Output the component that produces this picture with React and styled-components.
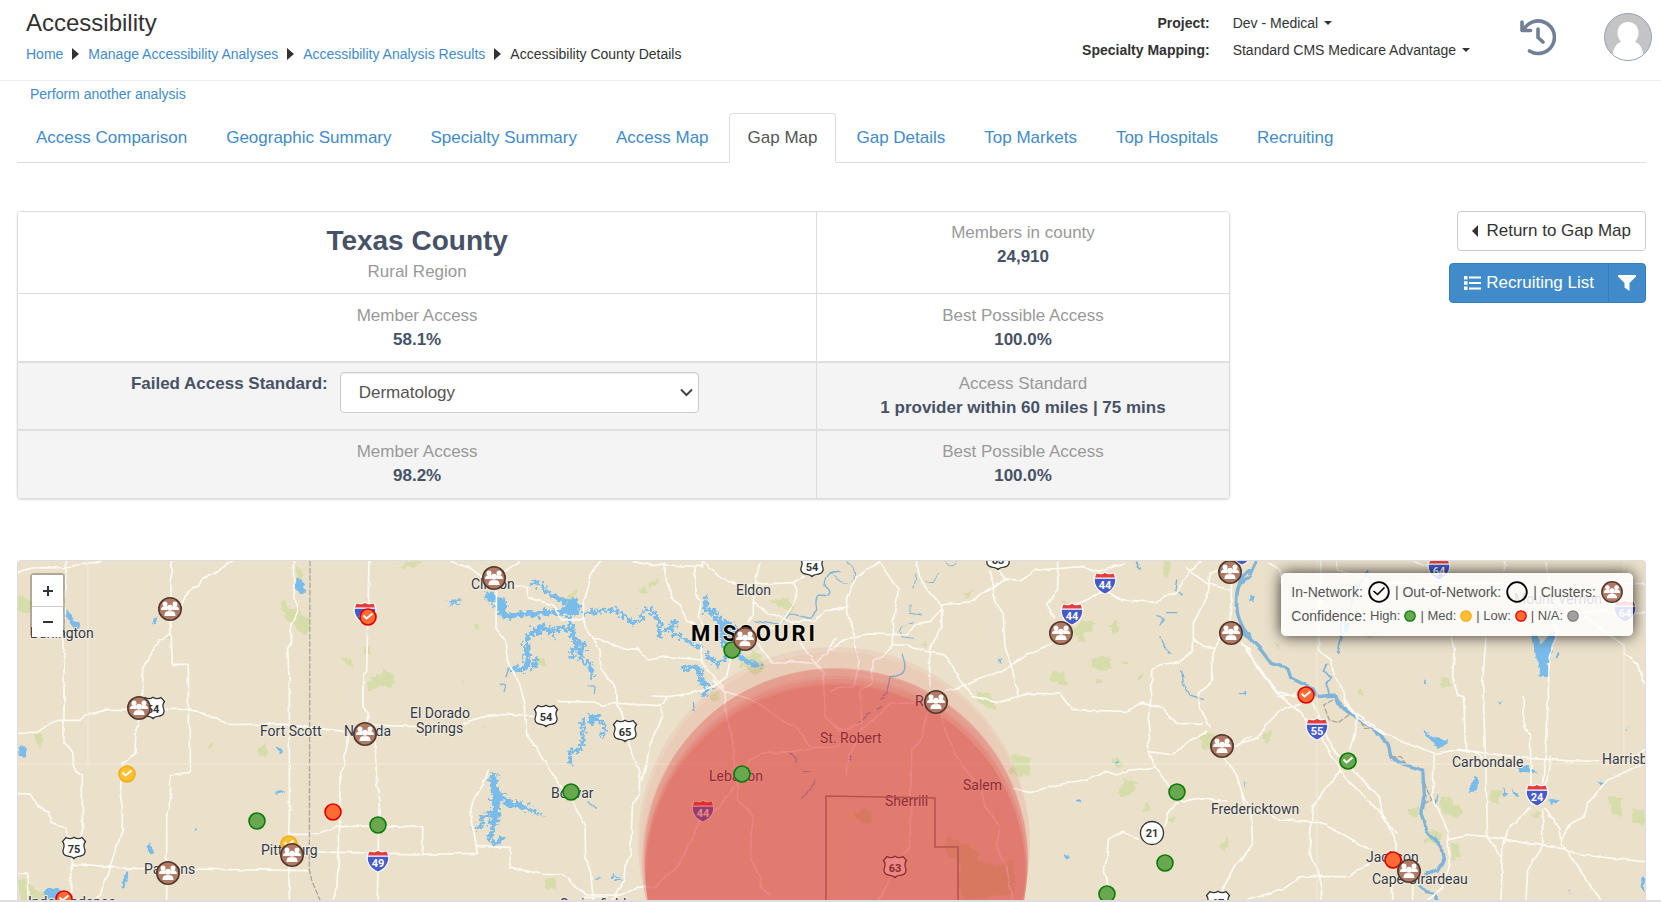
import React from "react";
import styled, { createGlobalStyle, css } from "styled-components";

const GlobalStyle = createGlobalStyle`
  *, *::before, *::after { box-sizing: border-box; }
  body {
    margin: 0;
    background: #fff;
    color: #333;
    font-family: "Liberation Sans", Arial, sans-serif;
    font-size: 14px;
    line-height: 20px;
  }
  button, select { font-family: inherit; }
`;

const Page = styled.div`
  display: flex;
  flex-direction: column;
  min-height: 100vh;
  border-bottom: 2px solid #dcdee2;
`;

const Header = styled.header`
  display: flex;
  align-items: flex-start;
  height: 81px;
  padding: 0 9px 0 26px;
  border-bottom: 1px solid #e8eef4;
`;

const Heading = styled.div`
  flex: 1;
  padding-top: 8px;
`;

const Title = styled.h1`
  margin: 0;
  font-size: 24px;
  font-weight: 400;
  line-height: 30px;
`;

const Breadcrumb = styled.nav`
  display: flex;
  align-items: center;
  gap: 9px;
  margin-top: 6px;
`;

const Link = styled.a`
  color: #428bca;
  text-decoration: none;
`;

const Triangle = styled.span`
  border: 6px solid transparent;
  ${({ $point }) =>
    $point === "right"
      ? css`border-left: 7px solid #333; border-right: 0;`
      : css`border-right: 6px solid #333; border-left: 0;`}
`;

const ProjectInfo = styled.dl`
  display: grid;
  grid-template-columns: auto auto;
  column-gap: 23px;
  row-gap: 7px;
  margin: 13px 50px 0 0;

  dt { font-weight: 700; text-align: right; }
  dd { margin: 0; }
`;

const PickerButton = styled.button`
  display: flex;
  align-items: center;
  gap: 6px;
  padding: 0;
  border: 0;
  background: none;
  color: #333;
  font-size: 14px;
  line-height: 20px;

  &::after {
    content: "";
    border: 4px solid transparent;
    border-top-color: #333;
    border-bottom: 0;
  }
`;

const IconButton = styled.button`
  display: flex;
  padding: 0;
  border: 0;
  border-radius: 50%;
  background: none;
  margin-top: ${({ $top }) => $top}px;
  margin-right: ${({ $right }) => $right}px;
`;

const Content = styled.main`
  flex: 1;
  display: flex;
  flex-direction: column;
  padding: 3px 15px 0 17px;
`;

const AnalysisLink = styled(Link)`
  align-self: flex-start;
  margin-left: 13px;
`;

const Tabs = styled.nav`
  display: flex;
  gap: 1px;
  margin-top: 9px;
  border-bottom: 1px solid #ddd;
`;

const Tab = styled.a`
  margin-bottom: -1px;
  padding: 12px 18px;
  border: 1px solid transparent;
  border-radius: 4px 4px 0 0;
  color: #428bca;
  font-size: 17px;
  line-height: 24px;
  text-decoration: none;
  ${({ $active }) =>
    $active &&
    css`
      border-color: #ddd #ddd #fff;
      background: #fff;
      color: #555;
    `}
`;

const Summary = styled.section`
  display: grid;
  grid-template-columns: minmax(0, 3fr) minmax(0, 1fr);
  gap: 12px;
  align-items: start;
  margin-top: 48px;
`;

const Panel = styled.div`
  border: 1px solid #ddd;
  border-radius: 4px;
  box-shadow: 0 1px 2px rgba(0, 0, 0, 0.15);
  overflow: hidden;
`;

const Cell = styled.div`
  padding-top: 10px;
  text-align: center;
  font-size: 17px;
  line-height: 24px;

  & + & { border-left: 1px solid #ddd; }
`;

const PanelRow = styled.div`
  display: grid;
  grid-template-columns: 60fr 31fr;
  min-height: ${({ $tall }) => ($tall ? 81 : 68)}px;
  background: ${({ $shaded }) => ($shaded ? "#f4f4f4" : "#fff")};
  box-shadow: ${({ $shaded }) => ($shaded ? "inset 0 1px 1px rgba(0, 0, 0, 0.08)" : "none")};

  & + & { border-top: 1px solid #ddd; }
  &:last-child { min-height: 69px; }
  &:first-child > ${Cell} { padding-top: 9px; }
`;

const CountyName = styled.h2`
  margin: 0;
  color: #475266;
  font-size: 28px;
  line-height: 39px;
`;

const Caption = styled.div`
  color: #999;
`;

const Value = styled.div`
  color: #475266;
  font-weight: 700;
`;

const StandardField = styled(Cell)`
  display: grid;
  grid-template-columns: 62fr 72fr 21fr;
  gap: 12px;
  align-items: start;
`;

const FieldLabel = styled.label`
  color: #475266;
  font-weight: 700;
  text-align: right;
`;

const SelectBox = styled.div`
  display: grid;
  align-items: center;

  > * { grid-area: 1 / 1; }
  svg { justify-self: end; margin-right: 6px; pointer-events: none; }
`;

const Select = styled.select`
  width: 100%;
  height: 41px;
  padding: 0 18px;
  appearance: none;
  border: 1px solid #ccc;
  border-radius: 4px;
  background: #fff;
  box-shadow: inset 0 1px 1px rgba(0, 0, 0, 0.08);
  color: #555;
  font-size: 17px;
`;

const Actions = styled.div`
  display: flex;
  flex-direction: column;
  align-items: flex-end;
  gap: 12px;
`;

const Button = styled.button`
  display: flex;
  align-items: center;
  gap: ${({ $primary }) => ($primary ? 5 : 8)}px;
  height: 40px;
  padding: 0 14px;
  border: 1px solid ${({ $primary }) => ($primary ? "#357ebd" : "#ccc")};
  border-radius: 4px;
  background: ${({ $primary }) => ($primary ? "#428bca" : "#fff")};
  color: ${({ $primary }) => ($primary ? "#fff" : "#333")};
  font-size: 17px;
  line-height: 24px;
`;

const ButtonGroup = styled.div`
  display: flex;

  ${Button}:first-child { border-radius: 4px 0 0 4px; }
  ${Button}:last-child {
    margin-left: -1px;
    padding: 0 9px;
    border-radius: 0 4px 4px 0;
  }
`;

const MapFrame = styled.section`
  position: relative;
  flex: 1;
  min-height: 340px;
  margin-top: 61px;
  border: 1px solid #ddd;
  border-bottom: 0;
  border-radius: 4px 4px 0 0;
  background: #ebe1cb;
  overflow: hidden;
`;

const MapDrawing = styled.svg`
  position: absolute;
  inset: 0;
  width: 100%;
  height: 100%;
`;

const ZoomControl = styled.div`
  position: absolute;
  top: 12px;
  left: 12px;
  border: 2px solid rgba(0, 0, 0, 0.25);
  border-bottom: 0;
  border-radius: 4px;
  background-clip: padding-box;
`;

const ZoomButton = styled.button`
  display: flex;
  align-items: center;
  justify-content: center;
  width: 31px;
  height: 31px;
  padding: 0;
  border: 0;
  background: #fff;

  & + & { border-top: 1px solid #ccc; }
`;

const Legend = styled.div`
  position: absolute;
  top: 12px;
  right: 12px;
  padding: 7px 10px 9px;
  border-radius: 5px;
  background: rgba(255, 255, 255, 0.84);
  box-shadow: 0 0 15px rgba(0, 0, 0, 0.8);
  color: #555;
`;

const LegendRow = styled.div`
  display: flex;
  align-items: center;
  gap: ${({ $small }) => ($small ? 4 : 5)}px;
  height: ${({ $small }) => ($small ? 23 : 24)}px;
  font-size: ${({ $small }) => ($small ? 13 : 14)}px;

  svg { flex: none; }
`;

const LegendTitle = styled.span`
  font-size: 14px;
`;

/* ---- icons ---- */

const HistoryIcon = () => (
  <svg width="36" height="38" viewBox="0 0 36 38" fill="none" stroke="#718096" strokeWidth="3.6" strokeLinecap="round" strokeLinejoin="round">
    <path d="M3.5 12A16.3 16.3 0 1 1 9.5 33" />
    <path d="M2 4v8.5h8.5M18 11v8.500l5 4.500" />
  </svg>
);

const Avatar = () => (
  <svg width="48" height="48" viewBox="0 0 48 48">
    <clipPath id="avatar"><circle cx="24" cy="24" r="23.500" /></clipPath>
    <g clipPath="url(#avatar)">
      <path d="M0 0h48v48H0z" fill="#c4c4c4" />
      <path d="M24 9c7 0 10.500 5 10.500 11 0 4-1.500 6.500-3.500 9 6 1.500 8.500 9 10 21H7c1.500-12 4-19.500 10-21-2-2.500-3.500-5-3.500-9 0-6 3.500-11 10.500-11z" fill="#fff" />
    </g>
    <circle cx="24" cy="24" r="23.500" fill="none" stroke="#93a3bd" />
  </svg>
);

const ListIcon = () => (
  <svg width="17" height="16" viewBox="0 0 17 16" fill="#fff">
    <path d="M0 1h3.500v3.500H0zM0 6.200h3.500v3.500H0zM0 11.500h3.500V15H0zM5 1.500h12v2H5zM5 7h12v2H5zM5 12.500h12v2H5z" />
  </svg>
);

const FilterIcon = () => (
  <svg width="18" height="16" viewBox="0 0 18 16" fill="#fff">
    <path d="M0 0h18v1.500L11.500 8v8L6.500 12.500V8L0 1.500z" />
  </svg>
);

const Chevron = () => (
  <svg width="13" height="9" viewBox="0 0 13 9" fill="none" stroke="#444" strokeWidth="2">
    <path d="M1 1.500l5.500 5.500L12 1.500" />
  </svg>
);

/* ---- map symbols ---- */

const CONFIDENCE = {
  high: ["#6aa84f", "#0b7a0b"],
  med: ["#fdc02f", "#f0ad1e"],
  low: ["#ff6b33", "#dd0000"],
  na: ["#a0a0a0", "#808080"],
};

const Cluster = ({ x, y, r = 11 }) => (
  <g transform={`translate(${x} ${y}) scale(${r / 11})`}>
    <circle r="11.200" fill="#b07b65" stroke="#54392f" strokeWidth="1.600" />
    <g fill="#fff">
      <circle cx="-5" cy="-5" r="2.500" />
      <circle cx="5" cy="-5" r="2.500" />
      <path d="M-9 1c0-3 2-4 4.500-4 1 0 1.700.2 2 .7C-3.500-1-3 .3-2 1zM9 1c0-3-2-4-4.500-4-1 0-1.700.2-2 .7C3.500-1 3 .3 2 1z" />
      <circle cy="-1.200" r="3" />
      <path d="M-5.500 7c0-3.500 1.500-4.700 3.500-4.700h4C4 2.300 5.500 3.500 5.500 7z" />
    </g>
  </g>
);

const Pin = ({ x, y, level, check, r = 8 }) => (
  <g transform={`translate(${x} ${y})`}>
    <circle r={r} fill={CONFIDENCE[level][0]} stroke={CONFIDENCE[level][1]} strokeWidth="1.600" />
    {check && <path d="M-4.500-1.500l3 3L4.500-3.500" fill="none" stroke="#fff" strokeWidth="2" />}
  </g>
);

const shieldText = { textAnchor: "middle", fontFamily: "Roboto, sans-serif", fontSize: 11, fontWeight: 700 };

const Interstate = ({ x, y, n }) => (
  <g transform={`translate(${x} ${y})`}>
    <path d="M-9-10.500c3 1.500 6 1 9-1 3 2 6 2.500 9 1 3 3 3 8 1.500 12C8.500 7 4 10 0 11.500-4 10-8.500 7-10.500 1.500-12-2.500-12-7.500-9-10.500z" fill="#fff" />
    <path d="M-8.500-9.500c3 1.300 6 1 8.500-.8 2.500 1.800 5.500 2.100 8.500.8L10-5.500h-20z" fill="#e43d3d" />
    <path d="M-10.200-4.300h20.400c.5 6-3.200 11.800-10.200 14.800-7-3-10.700-8.800-10.200-14.800z" fill="#465bc9" />
    <text y="5.500" fill="#fff" {...shieldText}>{n}</text>
  </g>
);

const UsRoute = ({ x, y, n }) => (
  <g transform={`translate(${x} ${y})`}>
    <path
      d="M-8-10.500c2.500 1.500 5.500 1.500 8-.3 2.500 1.800 5.500 1.800 8 .3l3.500 4C9.500-4 9.500-2 10.500.5c1.800 4-.5 7-4 7.500C4 8.300 1.500 8.500 0 10.500-1.500 8.500-4 8.300-6.500 8-10 7.500-12.300 4.500-10.500.5c1-2.500 1-4.500-1-7z"
      fill="#fff" stroke="#333" strokeWidth="1.300"
    />
    <text y="4.500" fill="#333" {...shieldText}>{n}</text>
  </g>
);

const Place = ({ x, y, children }) => (
  <text x={x} y={y} fontFamily="Roboto, sans-serif" fontSize="14" fill="#333a4a" stroke="#f3ecdd" strokeWidth="2" strokeLinejoin="round" paintOrder="stroke">
    {children}
  </text>
);

/* ---- map data ---- */

const places = [
  [30, 638, "Burlington"], [260, 736, "Fort Scott"], [344, 736, "Nevada"], [261, 855, "Pittsburg"],
  [144, 874, "Parsons"], [28, 907, "Independence"], [410, 718, "El Dorado"], [416, 733, "Springs"],
  [471, 589, "Clinton"], [736, 595, "Eldon"], [551, 798, "Bolivar"], [709, 781, "Lebanon"],
  [820, 743, "St. Robert"], [915, 706, "Rolla"], [963, 790, "Salem"], [885, 806, "Sherrill"],
  [1211, 814, "Fredericktown"], [1366, 862, "Jackson"], [1372, 884, "Cape Girardeau"],
  [1452, 767, "Carbondale"], [1602, 764, "Harrisburg"], [1514, 604, "Mount Vernon"], [560, 909, "Springfield"],
];

const interstates = [
  [365, 613, "49"], [378, 861, "49"], [703, 811, "44"], [1105, 583, "44"], [1072, 614, "44"],
  [1439, 569, "64"], [1317, 729, "55"], [1537, 795, "24"], [1625, 611, "64"], [1242, 554, "55"],
];

const usRoutes = [
  [74, 848, "75"], [153, 708, "54"], [546, 716, "54"], [625, 731, "65"],
  [812, 566, "54"], [895, 867, "63"], [998, 559, "63"], [1218, 902, "67"],
];

const clusters = [
  [170, 609], [139, 708], [365, 734], [292, 855], [168, 873], [494, 578], [745, 639],
  [936, 702], [1061, 633], [1230, 572], [1231, 633], [1222, 746], [1409, 871],
];

const pins = [
  [368, 617, "low", true], [64, 899, "low", true], [1306, 695, "low", true], [333, 812, "low"],
  [1393, 860, "low"], [127, 774, "med", true], [289, 844, "med", true], [257, 821, "high"],
  [378, 825, "high"], [732, 650, "high"], [571, 792, "high"], [742, 774, "high"],
  [1177, 792, "high"], [1165, 863, "high"], [1107, 894, "high"], [1348, 761, "high", true],
];

const coverage = [
  [834, 843, 196, 0.07], [835, 847, 195, 0.04], [836, 860, 192, 0.18], [835, 862, 193, 0.11],
  [836, 867, 191, 0.07], [836, 870, 191, 0.08], [835, 873, 190, 0.09], [836, 875, 190, 0.1],
];

/* Each tile is drawn on a grid of thirds of a pixel. */
const tiles = [
  {
    x: 0,
    parks: [
      "M50 135l25 5 15 15-5 35-30-5z", "M838 155l22 0 5 20 30-2 10 25 22 5 5 30-10 20-25-5-8-20-25-15-12-20z",
      "M1100 405l15-25 30-5 10-25 15 20 20 20-15 20-40-5-25 20z", "M1085 288l25 10 5 20-20-10zM1028 325l25 5 8 25-20-10z",
      "M102 545l20 5 8 20-10 25-15-20zM620 590l18-12-8 16z", "M775 595l20-12 10 20-10 18-20-5z",
      "M55 985l30 10 25 25 80 20-40 12-90 0zM890 55l15 5 3 25-12 15zM1195 58l20-20 45-8v15zM495 255l20 5-5 15z",
    ],
    lakes: [
      "M200 178l8 5 12 25 15 8 5 20-15 5-18-28-10-10zM888 80l8 5 15 10-2 12 10 20-15 3-18-8 5-15zM455 228l6-20 12-10-5 20z",
      "M55 590l12-5 14 20-4 22-22-10zM830 585l15 12-3 15-10-12zM826 730l15-14 12 8-20 10zM585 830l9 4-4 12z",
      "M443 885l8-5 8 20-3 14-12-12zM375 968l12-5-5 30-10 25-8-5zM130 1030l20-20 20 5 35 25-10 15-50-8z",
    ],
    roads: [
      "M52 67L92 54 192 53 305 33", "M200 33L192 165 192 578 214 600 218 640 228 665 247 675 247 850 222 900 218 940 212 960 212 1050",
      "M513 33L513 246 517 343 565 343 565 520 571 540 571 667 512 675 511 770 500 795 500 1050",
      "M697 33L640 72 607 87 597 107 580 112 555 140 545 170", "M513 250L475 275 428 352 428 440 415 515 408 540 405 612 365 640 361 740 367 770 367 840 330 950 310 1000 302 1035 280 1050",
      "M52 547L118 547 140 525 175 511 240 511 255 495 330 478 560 478 610 488 640 505 660 508 690 523 860 523 1035 545",
      "M52 731L90 732 115 770 150 790 153 815 200 838 205 860", "M52 972L80 973 85 1050M215 942L290 950 410 955 925 962",
      "M880 33L882 120 892 185 870 240 875 275 863 295 868 400 868 800 866 850 868 1050", "M1107 33L1100 365 1089 375 1089 470 1105 490 1100 520",
      "M1107 525L1260 530M866 850L955 850 1015 830 1110 828 1200 832 1215 826 1260 830M905 905L1260 912",
      "M1042 560L1040 590 1030 655 1020 670 1018 890 1010 1020 998 1050M1125 560L1130 705 1138 725 1132 1050",
    ],
    borders: ["M930 33L928 960 935 990 960 1050"],
  },
  {
    x: 420,
    jagged: true,
    parks: [
      "M655 120l20-12 8 18-25 10zM685 100l25-12 5 15-25 12zM1048 150l50-5 30 25-10 20-30-15zM342 320l30 5 8 25-35-5z",
      "M955 350l40-50 30 15 10 35-30 30-25-25zM120 393h10v8h-10zM375 985l35 0-5 30-25 5zM430 160l30-45 10 10-20 60z",
      "M163 225h10v8h-10zM193 525l8 3-3 10zM868 430l30-8 0 28-20 5z",
    ],
    lakes: [
      "M82 150l42 5-5 10-35-5zM195 125l25 5 20 15 10-10 12 30-5 25-25 0-15-40-15 5zM430 175l15-25 20-5 18 20-10 30-30 5z",
      "M210 670l22 0 0 40 15 20 20 15-25 10-5 60-15 25-15-5 5-50 5-20z", "M240 735l30 15 50 15 25 15 35 20-25-5-45-15-30-10-20 0z",
      "M340 330l15-5-5 30-15-10zM500 495l30 0 10 20-30 10zM880 200l50 15 30 30-5 50-35 10-20-40z", "M575 978l30 5-5 8-25-5z",
    ],
    rivers: [
      ["M335 95L360 100 375 120 400 140 430 150 445 180 455 230 460 265 475 300 485 330 510 345 515 380", 12],
      ["M240 185L265 200 300 195 320 190 345 195 375 185 410 188 440 185", 16],
      ["M490 190L540 182 580 180 600 190 640 220 665 205 668 180 700 185 720 215 715 260 745 235 765 210 755 250 790 265 830 290 850 285", 11],
      ["M460 240L420 235 390 245 370 230 345 240 320 265 320 330 325 355 280 358", 15],
      ["M460 300L455 320M465 270L495 290 475 310M350 240L360 255M395 235L400 255", 14],
      ["M855 145L860 180 890 190 900 225 930 240", 15], ["M1020 350L985 335 955 315 930 310 890 345 860 310M850 435L870 410 840 390 835 350 790 358", 12],
      ["M485 515L490 560 480 600 450 605M530 500L555 530 550 560M450 615L452 640", 10],
      ["M215 790L185 800 185 830 160 835M215 800L220 850 205 860 225 885 248 865", 12],
      ["M268 350L258 380M240 405Q265 395 252 425M505 410Q535 400 520 430M525 985L540 980M505 755L530 775", 4],
      ["M1000 212Q1040 220 1080 225L1110 190 1170 205 1190 180Q1180 120 1215 140 1245 130 1212 105 1215 60 1260 65", 4],
      ["M1108 608L1130 625 1125 648M1150 665L1170 665M1185 690L1160 730 1145 748M820 460L823 482", 4],
    ],
    roads: [
      "M95 35L150 55 200 90M297 35L245 70M230 100L228 235 255 270 262 330 300 405 316 470 320 555 350 595 415 700 460 760 495 830 497 920 512 970 520 1050",
      "M275 108L322 110 322 143 400 165 430 212 490 205", "M542 33L510 70 508 95 487 180 495 230 520 265 540 300 542 355 590 420 592 465 610 500 628 585 660 665 658 730 637 770 632 910 615 950 612 990 580 1050",
      "M520 265L550 268 590 292 655 298 685 330 740 320 845 330 855 350 900 400 915 430",
      "M130 520L190 500 275 492 340 500M413 455L520 456 545 465 590 460 720 467 745 440 697 438M720 467L728 500 715 530 690 580 680 640 665 690",
      "M745 440L800 432 880 410 920 380 930 330 935 300", "M640 35L700 47 735 40 735 90 750 110 755 140 780 170 800 210 820 220 845 300 845 340",
      "M735 45L850 50 850 35 880 60 900 85 955 105 1120 98 1150 80M825 50L825 130 845 150 835 200 850 230",
      "M1020 35L1010 80 1000 150 1000 195 985 215M1005 155L1045 190 1065 195 1120 220 1150 210 1185 212 1215 185 1260 172M1120 98L1130 135 1110 180 1080 225 1040 240M1000 270L1060 340 1120 335 1185 340 1220 310 1245 265M1140 280L1185 335 1210 370 1215 500 1260 545",
      "M205 660L195 690 160 750 152 780 172 910 0 913M172 890L270 892 270 955 330 965 365 972 430 975 460 1005 500 1035 600 1035 650 1015 700 1010 780 945 840 810 900 770 950 700 990 630 1030 610 1110 605 1260 585",
      "M880 390L915 430 920 500 940 580 945 680 955 690 955 750 1000 800 990 880 995 940 1025 985 1020 1010 1048 1035M915 425L1000 450 1100 520 1130 530 1170 590M0 830L8 830 8 910M495 1042L560 1042M600 1035L575 1050",
    ],
    borders: [],
  },
  {
    x: 830,
    parks: [
      "M400 130l30-8-10 20-15 5zM725 240l35-30 30 5 0 25-25 10 0 25-20-10zM832 225l30-15 8 30-20 15zM785 325l50-5 10 35-25 10-35-15z",
      "M655 370l45-8 5 25 8 25-20-10-28-10zM870 340l20-10 5 15zM920 380l20-12-10 28zM438 420l40 10 20 50-30-10-30-20z",
      "M545 615l55 5 0 55-40 5-30-20 20-10zM840 630l25-8 15 20-20 15zM865 730l20-45 40 10-15 35-30 10zM940 775l15-18 5 20-20 12z",
      "M1110 560l20-15 20 10 0 40-30 5zM1165 895l30-38 5 15-15 30zM70 795l35-25 18 20 0 28-30-3zM350 860l50 20 50 30-10 20 60 20 50-20 5 100-150 20-20-50 10-60-50-30z",
      "M270 290l20-20 5 20zM798 390h18v12h-18zM1000 30l25 5-10 50-15-10zM690 155l15-5 5 15zM1010 800l25 0-10 25z",
    ],
    lakes: ["M735 752l15-4 0 12-12 2zM700 912l15 2 3 15-10-5zM505 322l8 0-2 22-6-10zM855 632l12 0-3 20-8-10zM1230 425l18 0-2 8-16 0zM910 810l12 15M1240 690l8 15-3 10z"],
    rivers: [
      ["M0 70Q50 120 72 85 80 50 50 35M345 35Q360 60 382 38M325 70L310 98 285 95M258 75L252 115M240 165L240 190 275 195M250 215Q200 225 215 260L250 265", 3],
      ["M215 310Q240 370 200 378L180 380 170 430 150 445M155 470L140 480M120 490L85 520", 4],
      ["M980 200L1000 205 990 225M1040 185L1010 185M990 260L1000 290 1020 310M1055 360L1060 400 1080 435 1120 448M1040 90L1035 120 1060 135", 4],
      ["M1260 60Q1220 90 1220 150 1215 210 1260 262", 11], ["M920 35L930 55M60 630L65 620", 6],
    ],
    roads: [
      "M148 37L205 120 190 210 190 285M148 37L80 80 50 140 50 190 75 250 75 290 88 330 72 410 25 415 0 425",
      "M0 180L45 172M0 300L40 270 110 252 230 255 260 220 300 215 332 180M260 35L270 90 300 130 335 170 335 230 298 300M332 165L420 155 470 120 530 85M483 60L490 140 520 200 525 290 545 350 565 440",
      "M190 285L230 285 290 305 345 315 400 405 430 440 500 458 600 430 690 432 725 478 810 482 890 484 935 460",
      "M298 305L300 410M345 425L405 405 520 360 600 310 690 270M530 88L570 90 620 60 760 50 810 65 880 40M500 60L530 90M683 35L683 120 653 165 670 200",
      "M720 170L760 155 825 120 870 148 980 158 1000 140 1040 130 1060 90 1110 35M1070 55L1130 100 1200 120M1200 40L1140 70 1130 140 1090 220 1090 300M1090 265L1120 292 1155 295M1170 260L1145 320 1145 395 1105 430 1108 470 1140 530",
      "M1090 300L1050 335 985 345 965 360 965 430 955 500 960 540 955 600 975 650 1020 710M935 460L1000 475 1040 520 1120 523M955 605L1030 615 1070 580 1130 545M1205 100L1200 220M1235 280L1260 300",
      "M550 715L600 728 680 705 760 690 830 665 860 675 900 660 970 652M1055 755L1100 745 1185 755M1045 760L1020 775 1005 830M925 865L880 843 835 868 830 930 820 965 835 1010",
      "M1210 590L1260 560M1180 625L1220 675 1245 760M1260 900L1215 945 1175 1020M190 285L160 320 130 330 125 400 90 420 95 520 40 540 15 530M255 460L180 460 120 520 90 540 50 640 50 670",
      "M290 490L280 560 245 600 240 890 220 915M335 500L350 560 400 650 455 720 465 770 510 830 500 890 530 950 545 1050M180 990L145 1050",
    ],
    borders: [],
  },
  {
    x: 1241,
    parks: [
      "M60 545l35 0-10 25-15 8zM600 385l25-3 0 25-25 0zM350 420l15 5 3 15-15-5zM595 740l30 0 40 40-15 30-50-30zM748 720l35 5-10 35-25-5z",
      "M1100 740l40 5 0 60-30-20zM1175 775l35 5 0 45-35-5zM500 780l35-12-5 35-20-5zM100 280l18 5-5 15zM370 240l45 5-5 15-35 0zM630 880l25 0 0 40-22 10zM865 790l40-5-15 25z",
      "M550 870l20-30 30 10-5 30-20 0z",
    ],
    lakes: [
      "M875 250l10 5 15 25 30-35 10 10-10 60-10 25 5 40-30 0-5-50-15-40zM545 540l15 10 30 15 30 5 0 10-25 15-15-10zM700 680l10 5 0 40-25 5 5-20z",
      "M785 705l8 20 12 5-18 10zM810 710l28 30-15-5zM815 635l60 20 15 15-50-5zM925 745l40 10-35 10zM1070 695l28 5-20 6zM770 455l12 3-8 8zM308 215h18v30h-18zM25 138h20l-5 15-15-3zM1153 545l10-20-5 15zM980 1018l12 15-8-5zM635 880l5 8-6-3zM545 398l10-10 5 20M1200 990l12-15v50l-8-5z",
    ],
    rivers: [
      ["M0 240L60 300 90 340 140 355 150 385 215 415 230 440 280 435 290 460 330 490 400 540 440 580 450 620 480 640 545 660 550 730 540 790 560 850 600 890 608 935 590 960 555 970M540 1010L555 1025 585 1030 585 1050", 10],
      ["M45 35L25 80 0 100", 8], ["M380 65L340 130 320 200M300 225L300 270 290 310M265 435L255 400 268 385 250 360 260 340", 5],
      ["M590 735L585 760", 4], ["M955 310L950 325", 6],
    ],
    roads: [
      "M0 280L25 300 40 340 100 420 180 490 240 560 310 680 430 800 465 880 465 900", "M10 290L60 360 110 425 215 450 270 590 340 665 415 740 425 800 465 850",
      "M110 440L165 430M205 455L120 480 90 510 65 540 45 565 0 580M85 40L120 60 120 100M240 35L232 300 270 330 280 380 310 425 310 460 350 500 345 540 325 600",
      "M310 450L340 485 430 550 500 580 580 610 650 600 710 610 738 640", "M345 500L430 555M650 598L860 625 1000 633 1060 633 1185 620 1210 600",
      "M285 35L290 60 420 100 780 100M630 260L640 300 635 380 650 435 668 440 674 605M735 260L725 400 735 660 738 800 740 860 780 920M790 35L790 60",
      "M1210 400L1190 340 1150 310 1150 290 1030 200M915 35L945 260 925 320 918 560 905 705M850 440L848 535 868 550 870 705M928 620L915 710M970 180L1210 190M1040 105L1210 100",
      "M580 610L575 740 620 840 625 950 600 1020 560 1050M865 775L800 840 785 900 780 1050M905 775L905 890 860 960 855 1050M915 775L955 840 960 880 1080 1050",
      "M625 868L690 855 740 860 860 880 960 895 1020 915 1210 935M1210 640L1100 690 1040 760 1030 800 990 820 960 870M520 35L560 50",
      "M300 660L245 730 215 770 205 900 220 940 240 980 242 1050M70 790L120 810 230 815 300 850 390 900M0 725L30 790 35 880 0 935M20 1050L130 1015 180 980 320 980 385 940M455 980L455 1050M515 1000L515 1050",
    ],
    borders: ["M275 450L248 465 265 510 292 518 330 490M360 515L370 535 395 535M450 620L480 620 500 650M550 700L572 750 545 762"],
  },
];

/* Roughens the edges of shores and woods so that they read as natural outlines. */
const Rough = ({ id, frequency, scale }) => (
  <filter id={id} filterUnits="userSpaceOnUse" x="0" y="0" width="1270" height="1060" colorInterpolationFilters="sRGB">
    <feTurbulence type="fractalNoise" baseFrequency={frequency} numOctaves="2" seed="4" result="noise" />
    <feDisplacementMap in="SourceGraphic" in2="noise" scale={scale} xChannelSelector="R" yChannelSelector="G" />
  </filter>
);

const MapBase = () => (
  <MapDrawing viewBox="18 561 1627 400" preserveAspectRatio="xMidYMin slice" role="img" aria-label="Gap map of southern Missouri">
    <defs>
      <Rough id="shore" frequency="0.09" scale="36" />
      <Rough id="edge" frequency="0.06" scale="20" />
      <Rough id="lane" frequency="0.03" scale="12" />
    </defs>
    {tiles.map((t) => (
      <g key={t.x} transform={`translate(${t.x} 550) scale(0.33333)`} fill="none" strokeLinejoin="round" strokeLinecap="round">
        <g fill="#d6dcaa" filter="url(#edge)">
          {t.parks.map((d) => <path key={d} d={d} />)}
        </g>
        <g filter={t.jagged ? "url(#shore)" : "url(#edge)"}>
          {t.lakes.map((d) => <path key={d} d={d} fill="#79bcec" />)}
          {(t.rivers || []).filter(([, w]) => t.jagged && w > 5).map(([d, w]) => <path key={d} d={d} stroke="#79bcec" strokeWidth={w} />)}
        </g>
        <g filter="url(#lane)">
          {(t.rivers || []).filter(([, w]) => !t.jagged || w <= 5).map(([d, w]) => <path key={d} d={d} stroke="#7fb4da" strokeWidth={w} />)}
          {t.roads.map((d) => <path key={d} d={d} stroke="#fcfaf3" strokeWidth="5" />)}
        </g>
        {t.borders.map((d) => <path key={d} d={d} stroke="#aaa69c" strokeWidth="4" strokeDasharray="14 8" />)}
      </g>
    ))}
    <path d="M18 764H1645M88 561V764M1317 561V901M1624 561V764" stroke="#f3ebda" fill="none" />
    {interstates.map(([x, y, n]) => <Interstate key={`${x}-${y}`} x={x} y={y} n={n} />)}
    {usRoutes.map(([x, y, n]) => <UsRoute key={`${x}-${y}`} x={x} y={y} n={n} />)}
    <circle cx="1152" cy="833" r="11.500" fill="#fff" stroke="#333" strokeWidth="1.300" />
    <text x="1152" y="837" fill="#333" {...shieldText}>21</text>
    {places.map(([x, y, name]) => <Place key={name} x={x} y={y}>{name}</Place>)}
    <text x="691" y="641" fontFamily="Roboto, sans-serif" fontSize="22" fontWeight="700" letterSpacing="3" fill="#000" stroke="#f3ecdd" strokeWidth="2" paintOrder="stroke">MISSOURI</text>
    {coverage.map(([cx, cy, r, o]) => <circle key={cy} cx={cx} cy={cy} r={r} fill="rgb(220,40,40)" fillOpacity={o} />)}
    <path d="M826 901V796L935 798V847H958V901" fill="none" stroke="#b9534f" strokeWidth="1.600" />
    {pins.map(([x, y, level, check]) => <Pin key={`${x}-${y}`} x={x} y={y} level={level} check={check} />)}
    {clusters.map(([x, y]) => <Cluster key={`${x}-${y}`} x={x} y={y} />)}
  </MapDrawing>
);

const Ring = ({ check }) => (
  <svg width="22" height="22" viewBox="-11 -11 22 22" fill="none" stroke="#000">
    <circle r="9.800" strokeWidth="1.800" />
    {check && <path d="M-5.500-1l4 3.500L5.500-4.500" strokeWidth="1.600" />}
  </svg>
);

const Dot = ({ level }) => (
  <svg width="12" height="12" viewBox="-6 -6 12 12">
    <circle r="5.200" fill={CONFIDENCE[level][0]} stroke={CONFIDENCE[level][1]} strokeWidth="1.300" />
  </svg>
);

const tabs = [
  "Access Comparison", "Geographic Summary", "Specialty Summary", "Access Map", "Gap Map",
  "Gap Details", "Top Markets", "Top Hospitals", "Recruiting",
];

const Stat = ({ label, value }) => (
  <Cell>
    <Caption>{label}</Caption>
    <Value>{value}</Value>
  </Cell>
);

export default function App() {
  return (
    <Page>
      <GlobalStyle />
      <Header>
        <Heading>
          <Title>Accessibility</Title>
          <Breadcrumb aria-label="Breadcrumb">
            <Link href="#home">Home</Link>
            <Triangle $point="right" />
            <Link href="#analyses">Manage Accessibility Analyses</Link>
            <Triangle $point="right" />
            <Link href="#results">Accessibility Analysis Results</Link>
            <Triangle $point="right" />
            <span>Accessibility County Details</span>
          </Breadcrumb>
        </Heading>
        <ProjectInfo>
          <dt>Project:</dt>
          <dd><PickerButton>Dev - Medical</PickerButton></dd>
          <dt>Specialty Mapping:</dt>
          <dd><PickerButton>Standard CMS Medicare Advantage</PickerButton></dd>
        </ProjectInfo>
        <IconButton aria-label="History" $top={18} $right={48}><HistoryIcon /></IconButton>
        <IconButton aria-label="Account" $top={13} $right={0}><Avatar /></IconButton>
      </Header>
      <Content>
        <AnalysisLink href="#new">Perform another analysis</AnalysisLink>
        <Tabs>
          {tabs.map((name) => (
            <Tab key={name} href="#tab" $active={name === "Gap Map"} aria-current={name === "Gap Map" ? "page" : undefined}>{name}</Tab>
          ))}
        </Tabs>
        <Summary>
          <Panel>
            <PanelRow $tall>
              <Cell>
                <CountyName>Texas County</CountyName>
                <Caption>Rural Region</Caption>
              </Cell>
              <Stat label="Members in county" value="24,910" />
            </PanelRow>
            <PanelRow>
              <Stat label="Member Access" value="58.1%" />
              <Stat label="Best Possible Access" value="100.0%" />
            </PanelRow>
            <PanelRow $shaded>
              <StandardField>
                <FieldLabel htmlFor="standard">Failed Access Standard:</FieldLabel>
                <SelectBox>
                  <Select id="standard" defaultValue="Dermatology"><option>Dermatology</option></Select>
                  <Chevron />
                </SelectBox>
              </StandardField>
              <Stat label="Access Standard" value="1 provider within 60 miles | 75 mins" />
            </PanelRow>
            <PanelRow $shaded>
              <Stat label="Member Access" value="98.2%" />
              <Stat label="Best Possible Access" value="100.0%" />
            </PanelRow>
          </Panel>
          <Actions>
            <Button><Triangle $point="left" />Return to Gap Map</Button>
            <ButtonGroup>
              <Button $primary><ListIcon />Recruiting List</Button>
              <Button $primary aria-label="Filter"><FilterIcon /></Button>
            </ButtonGroup>
          </Actions>
        </Summary>
        <MapFrame>
          <MapBase />
          <ZoomControl>
            <ZoomButton aria-label="Zoom in">
              <svg width="10" height="10" viewBox="0 0 10 10" stroke="#333" strokeWidth="2"><path d="M5 0v10M0 5h10" /></svg>
            </ZoomButton>
            <ZoomButton aria-label="Zoom out">
              <svg width="10" height="10" viewBox="0 0 10 10" stroke="#333" strokeWidth="2"><path d="M0 5h10" /></svg>
            </ZoomButton>
          </ZoomControl>
          <Legend>
            <LegendRow>
              In-Network: <Ring check /> | Out-of-Network: <Ring /> | Clusters:
              <svg width="22" height="22" viewBox="-11 -11 22 22"><Cluster x={0} y={0} r={10} /></svg>
            </LegendRow>
            <LegendRow $small>
              <LegendTitle>Confidence:</LegendTitle> High: <Dot level="high" /> | Med: <Dot level="med" /> | Low: <Dot level="low" /> | N/A: <Dot level="na" />
            </LegendRow>
          </Legend>
        </MapFrame>
      </Content>
    </Page>
  );
}
